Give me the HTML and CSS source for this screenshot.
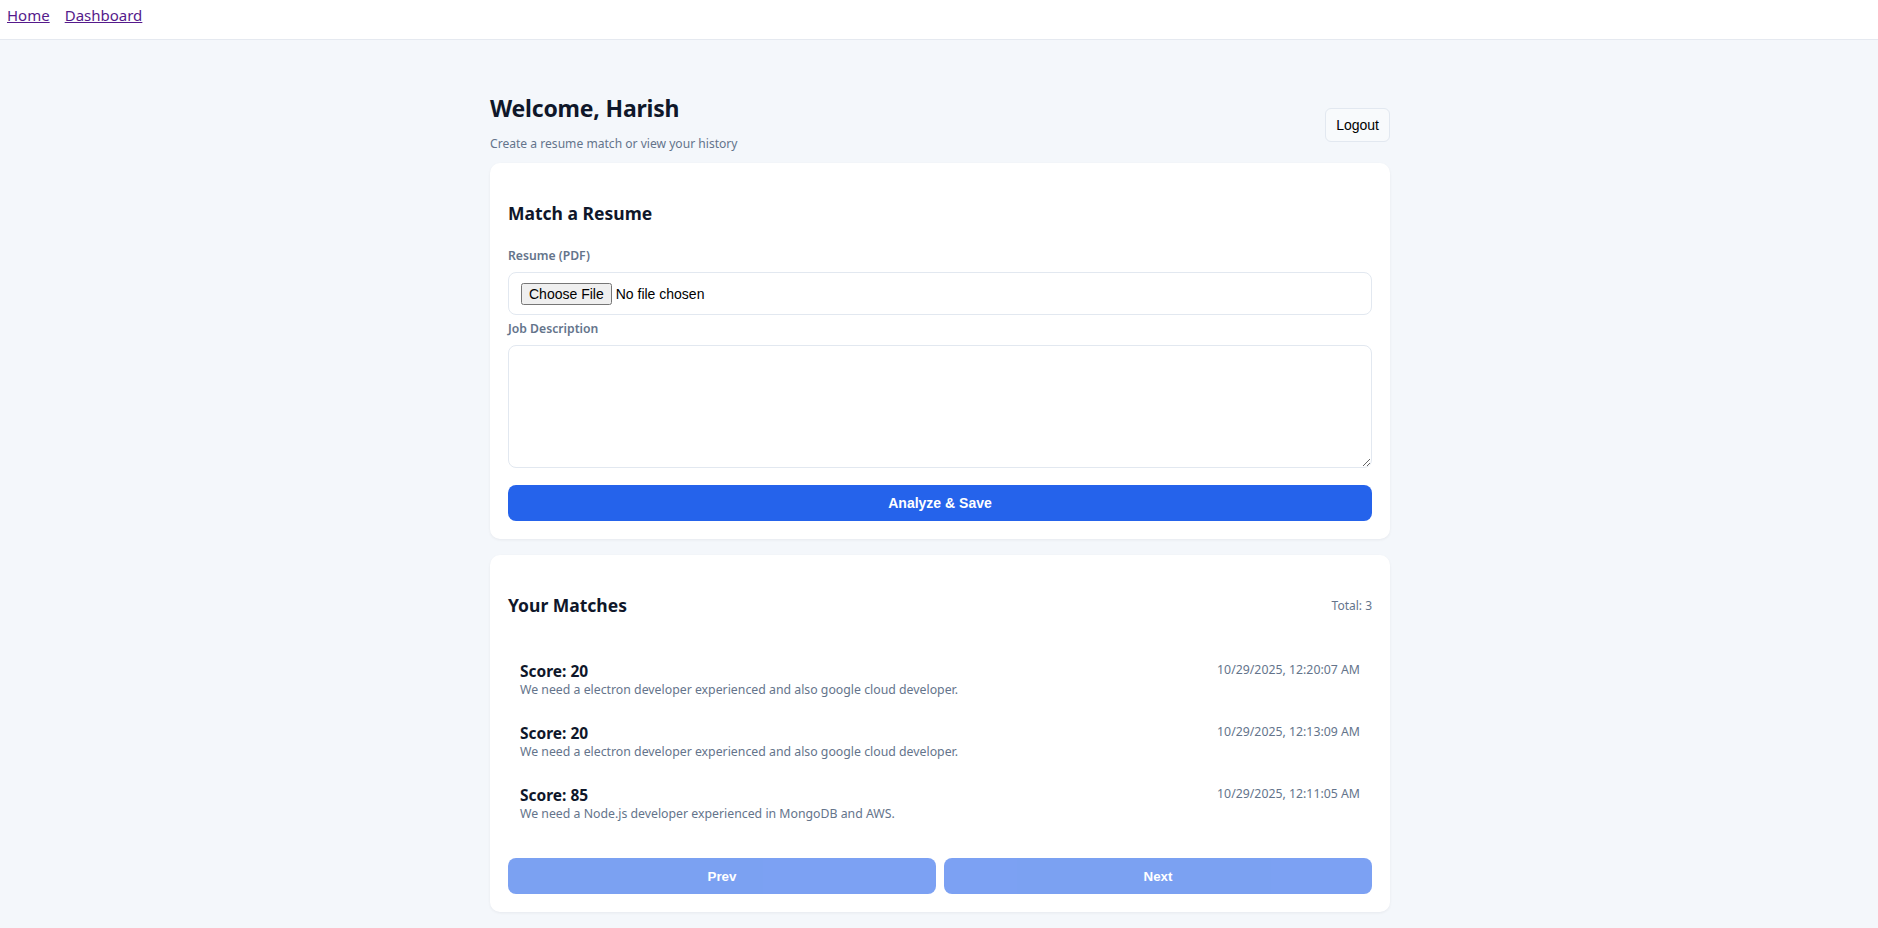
FILE: index.html
```html
<!DOCTYPE html>
<html lang="en">
<head>
<meta charset="utf-8">
<title>Dashboard</title>
<link rel="stylesheet" href="styles.css">
</head>
<body>
<nav class="topnav">
  <a href="#" class="nav-link">Home</a>
  <a href="#" class="nav-link">Dashboard</a>
</nav>
<main class="page">
  <header class="page-header">
    <div class="page-intro">
      <h1 class="page-title">Welcome, Harish</h1>
      <p class="page-subtitle">Create a resume match or view your history</p>
    </div>
    <button class="btn-logout" type="button">Logout</button>
  </header>

  <section class="card">
    <h2 class="card-title">Match a Resume</h2>
    <form class="match-form">
      <label class="field-label" for="resume">Resume (PDF)</label>
      <div class="file-box">
        <input id="resume" class="file-input" type="file" accept="application/pdf">
      </div>
      <label class="field-label" for="jd">Job Description</label>
      <textarea id="jd" class="jd-input"></textarea>
      <button type="button" class="btn-primary">Analyze &amp; Save</button>
    </form>
  </section>

  <section class="card">
    <div class="card-head">
      <h2 class="card-title card-title-inline">Your Matches</h2>
      <span class="total">Total: 3</span>
    </div>
    <ul class="match-list">
      <li class="match-item">
        <div class="match-top">
          <span class="match-score">Score: 20</span>
          <span class="match-date">10/29/2025, 12:20:07 AM</span>
        </div>
        <div class="match-desc">We need a electron developer experienced and also google cloud developer.</div>
      </li>
      <li class="match-item">
        <div class="match-top">
          <span class="match-score">Score: 20</span>
          <span class="match-date">10/29/2025, 12:13:09 AM</span>
        </div>
        <div class="match-desc">We need a electron developer experienced and also google cloud developer.</div>
      </li>
      <li class="match-item">
        <div class="match-top">
          <span class="match-score">Score: 85</span>
          <span class="match-date">10/29/2025, 12:11:05 AM</span>
        </div>
        <div class="match-desc">We need a Node.js developer experienced in MongoDB and AWS.</div>
      </li>
    </ul>
    <div class="pager">
      <button type="button" class="btn-primary btn-page" disabled>Prev</button>
      <button type="button" class="btn-primary btn-page" disabled>Next</button>
    </div>
  </section>
</main>
</body>
</html>
```

FILE: styles.css
```css
* { box-sizing: border-box; }

body {
  margin: 0;
  background: #f4f7fb;
  font-family: "Segoe UI", "Noto Sans", sans-serif;
  color: #0f172a;
}

.topnav {
  height: 40px;
  background: #ffffff;
  border-bottom: 1px solid #e5e9f0;
  display: flex;
  gap: 15px;
  padding: 4px 7px 0;
}

.nav-link {
  color: #551a8b;
  font-size: 15px;
  line-height: 22px;
}

.page {
  width: 900px;
  margin: 0 0 0 calc(50% - 449px);
  padding: 53px 0 40px;
}

.page-header {
  display: flex;
  justify-content: space-between;
  align-items: center;
  margin-bottom: 10px;
}

.page-title {
  margin: 0;
  font-size: 23px;
  line-height: 30px;
  letter-spacing: -0.2px;
  font-weight: 700;
  color: #0f172a;
}

.page-subtitle {
  margin: 12px 0 0;
  font-size: 12.1px;
  line-height: 18px;
  color: #64748b;
}

.btn-logout {
  margin-top: 4px;
  font-family: "Liberation Sans", Arial, sans-serif;
  font-size: 14px;
  line-height: 16px;
  padding: 8px 10px;
  background: #f8fafc;
  color: #000;
  border: 1px solid #e2e8f0;
  border-radius: 6px;
}

.card {
  background: #ffffff;
  border-radius: 10px;
  padding: 18px;
  box-shadow: 0 1px 3px rgba(15, 23, 42, 0.06);
  margin-bottom: 16px;
}

.card-title {
  margin: 20px 0 23px;
  font-size: 17.5px;
  line-height: 24px;
  font-weight: 700;
  color: #0f172a;
}

.match-form {
  display: flex;
  flex-direction: column;
}

.field-label {
  display: block;
  font-size: 12.2px;
  line-height: 16px;
  font-weight: 600;
  color: #64748b;
  margin-bottom: 8px;
}

.file-box {
  border: 1px solid #e2e8f0;
  border-radius: 8px;
  padding: 9px 12px;
  height: 43px;
  margin-bottom: 6px;
  display: flex;
  align-items: center;
}

.file-input {
  font-family: "Liberation Sans", Arial, sans-serif;
  font-size: 14px;
  color: #000;
}

.jd-input {
  display: block;
  width: 100%;
  height: 123px;
  border: 1px solid #e2e8f0;
  border-radius: 8px;
  padding: 10px 12px;
  margin: 0 0 17px;
  resize: vertical;
  font-family: inherit;
  font-size: 14px;
}

.btn-primary {
  display: block;
  width: 100%;
  height: 36px;
  border: 0;
  border-radius: 8px;
  background: #2563eb;
  color: #ffffff;
  font-family: "Liberation Sans", Arial, sans-serif;
  font-size: 14px;
  font-weight: 700;
}

.btn-primary:disabled {
  opacity: 0.6;
}

.card-head {
  display: flex;
  justify-content: space-between;
  align-items: center;
  margin-top: 20px;
}

.card-title-inline {
  margin: 0;
}

.total {
  font-size: 12px;
  color: #64748b;
}

.match-list {
  list-style: none;
  margin: 32px 0 23px;
  padding: 0;
}

.match-item {
  padding: 12px;
}

.match-top {
  display: flex;
  justify-content: space-between;
  align-items: flex-start;
}

.match-score {
  font-size: 15.5px;
  line-height: 20px;
  font-weight: 700;
  color: #0f172a;
}

.match-date {
  font-size: 12.3px;
  line-height: 18px;
  color: #64748b;
}

.match-desc {
  font-size: 12.3px;
  line-height: 18px;
  color: #64748b;
}

.pager {
  display: flex;
  gap: 8px;
}

.btn-page {
  flex: 1;
  height: 36px;
  font-size: 13.33px;
}
```
